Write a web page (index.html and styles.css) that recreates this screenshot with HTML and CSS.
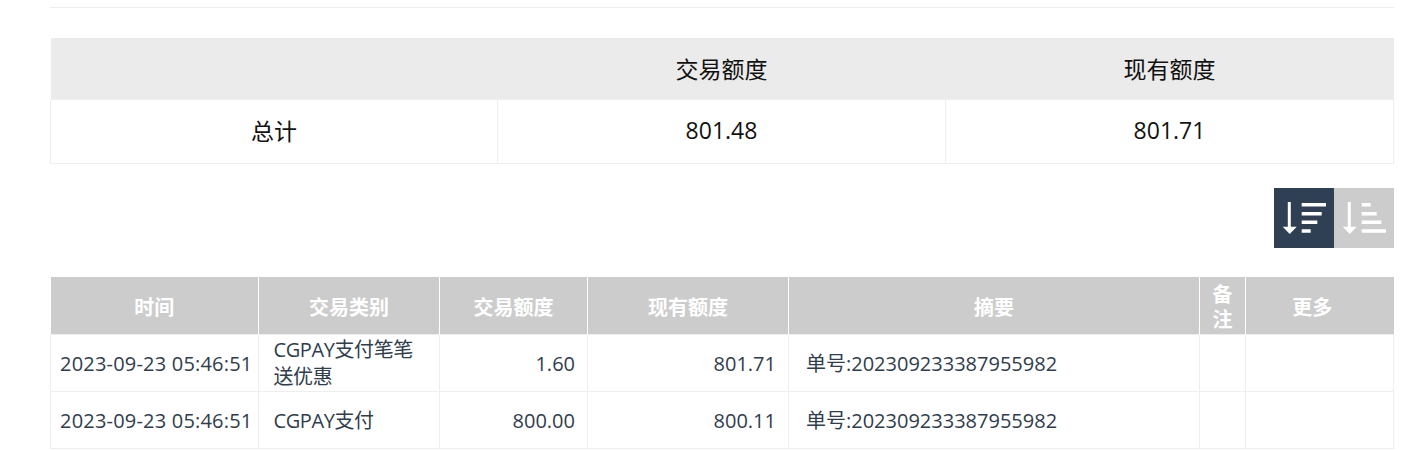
FILE: index.html
```html
<!DOCTYPE html>
<html lang="zh-CN">
<head>
<meta charset="utf-8">
<title>交易记录</title>
<link rel="stylesheet" href="styles.css">
</head>
<body>
<main class="page">
  <hr class="rule">
  <table class="summary">
    <colgroup><col class="s1"><col class="s2"><col class="s3"></colgroup>
    <thead><tr><th></th><th>交易额度</th><th>现有额度</th></tr></thead>
    <tbody><tr><td>总计</td><td>801.48</td><td>801.71</td></tr></tbody>
  </table>
  <div class="sorts">
    <button class="sort active" aria-label="降序">
      <svg width="60" height="60" viewBox="0 0 60 60"><path class="shaft" d="M15.300 14V39"/><path class="head" d="M8.700 38.700H22.700L15.700 46z"/><path class="bars" d="M27.700 16.700H52M27.700 25.700H47.700M27.700 34.300H43.300M27.700 43H36.700"/></svg>
    </button>
    <button class="sort" aria-label="升序">
      <svg width="60" height="60" viewBox="0 0 60 60"><path class="shaft" d="M15.300 14V39"/><path class="head" d="M8.700 38.700H22.700L15.700 46z"/><path class="bars" d="M27.700 16.700H36.700M27.700 25.700H42.700M27.700 34.300H47.300M27.700 43H52"/></svg>
    </button>
  </div>
  <table class="records">
    <colgroup><col class="c1"><col class="c2"><col class="c3"><col class="c4"><col class="c5"><col class="c6"><col class="c7"></colgroup>
    <thead><tr><th>时间</th><th>交易类别</th><th>交易额度</th><th>现有额度</th><th>摘要</th><th>备注</th><th class="more">更多</th></tr></thead>
    <tbody>
      <tr><td class="time">2023-09-23 05:46:51</td><td class="type">CGPAY支付笔笔送优惠</td><td class="num">1.60</td><td class="num">801.71</td><td class="memo">单号:202309233387955982</td><td></td><td></td></tr>
      <tr><td class="time">2023-09-23 05:46:51</td><td class="type">CGPAY支付</td><td class="num">800.00</td><td class="num">800.11</td><td class="memo">单号:202309233387955982</td><td></td><td></td></tr>
    </tbody>
  </table>
</main>
</body>
</html>
```
FILE: styles.css
```css
* { box-sizing: border-box; }
html, body { margin: 0; background: #fff; }
body { font-family: "Open Sans", "Noto Sans CJK SC", sans-serif; overflow: hidden; }
.page { padding: 7px 10px 0 50px; display: flex; flex-direction: column; }
.rule { margin: 0 0 30px; border: 0; border-top: 1px solid #eee; }
table { border-collapse: collapse; table-layout: fixed; width: 1344px; }

.summary { color: #111; font-size: 23px; text-align: center; }
.summary th { height: 61px; background: #ebebeb; font-weight: 400; padding: 0 0 1px; }
.summary td { height: 64px; border: 1px solid #eee; padding: 0 0 2px; }
.s1 { width: 447px; }
.s2 { width: 448px; }

.sorts { display: flex; justify-content: flex-end; margin: 24px 0 29px; }
.sort { width: 60px; height: 60px; padding: 0; border: 0; background: #ccc; display: block; }
.sort.active { background: #2f4054; }
.sort svg { display: block; filter: blur(0.6px); }
.shaft { stroke: #fff; stroke-width: 3; fill: none; }
.head { fill: #fff; }
.bars { stroke: #fff; stroke-width: 3.500; fill: none; }

.records { font-size: 20px; color: #2f3d4d; width: 1343px; }
.records th { height: 58px; background: #ccc; color: #fff; font-size: 20px; font-weight: 700; text-align: center; padding: 4px 10px 0; border-left: 1px solid #fff; line-height: 25px; }
.records th:first-child { border-left: 0; }
.records th.more { padding-right: 25px; }
.records td { height: 57px; border: 1px solid #eee; padding: 0 10px; line-height: 27px; white-space: nowrap; }
.records td.time { padding-left: 9px; letter-spacing: 0.2px; }
.records td.type { white-space: normal; padding: 0 14.500px; letter-spacing: -0.4px; }
.records td.num { text-align: right; padding-right: 12px; }
.records td.memo { padding-left: 17px; }
.c1 { width: 208px; }
.c2 { width: 181px; }
.c3 { width: 148px; }
.c4 { width: 201px; }
.c5 { width: 411px; }
.c6 { width: 46px; }
.c7 { width: 148px; }
```
